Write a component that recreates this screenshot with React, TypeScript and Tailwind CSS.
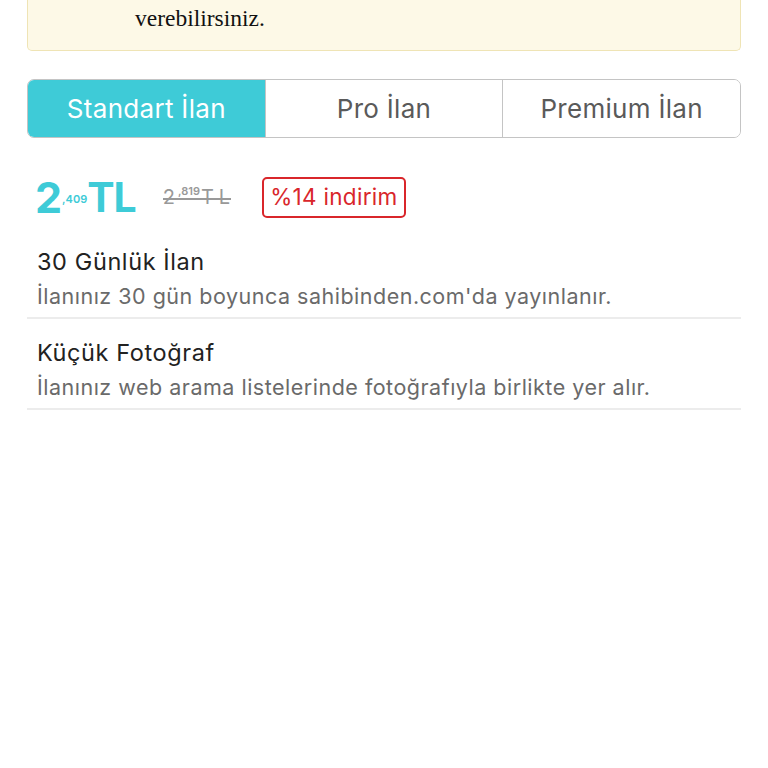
const tabs = ['Standart İlan', 'Pro İlan', 'Premium İlan']

const features = [
  {
    title: '30 Günlük İlan',
    desc: "İlanınız 30 gün boyunca sahibinden.com'da yayınlanır.",
  },
  {
    title: 'Küçük Fotoğraf',
    desc: 'İlanınız web arama listelerinde fotoğrafıyla birlikte yer alır.',
  },
]

export default function App() {
  return (
    <div className="min-h-[768px] w-[768px] bg-white font-['Inter','Liberation_Sans',sans-serif]">
      <div className="mx-[27px] flex h-[51px] items-start rounded-b-[5px] border-x border-b border-[#efe4b5] bg-[#fdf9e7] pl-[107px] pt-[3px]">
        <p className="font-['Liberation_Serif',serif] text-[23.5px] leading-[30px] text-[#111]">
          verebilirsiniz.
        </p>
      </div>

      <div className="mx-[27px] mt-[28px] flex h-[59px] overflow-hidden rounded-[7px] border border-[#c4c4c4]">
        {tabs.map((tab, i) => (
          <div
            key={tab}
            className={
              i === 0
                ? 'flex flex-1 items-center justify-center bg-[#3ecbd7] text-[26px] tracking-[0.3px] text-white'
                : 'flex flex-1 items-center justify-center border-l border-[#c4c4c4] bg-white text-[26px] tracking-[0.3px] text-[#5a5a5a]'
            }
          >
            {tab}
          </div>
        ))}
      </div>

      <div className="ml-[35px] mr-[37px] mt-[38px] flex h-[42px] items-center">
        <div className="flex items-center font-bold text-[#3ecbd7]">
          <span className="text-[43px] leading-none">2</span>
          <span className="mt-[4px] text-[11px] font-semibold">,409</span>
          <span className="text-[41px] leading-none tracking-[-1px]">TL</span>
        </div>
        <div className="relative ml-[27px] flex items-start text-[#999]">
          <span className="text-[20px] leading-none tracking-[1px]">2</span>
          <span className="ml-[2px] mt-[-1px] text-[11px] font-semibold leading-none">,819</span>
          <span className="ml-[1px] text-[20px] leading-none tracking-[5px]">TL</span>
          <span className="absolute left-0 right-[4px] top-[11px] h-[1.5px] bg-[#999]" />
        </div>
        <div className="ml-[27px] flex h-[41px] items-center rounded-[5px] border-2 border-[#d9262b] px-[6px] text-[22.5px] tracking-[0.3px] text-[#d9262b]">
          %14 indirim
        </div>
      </div>

      <div className="mx-[27px] mt-[10px]">
        {features.map((f) => (
          <div key={f.title} className="border-b-2 border-[#ececec] pb-[5px] pl-[10px] pt-[18px]">
            <div className="text-[23.5px] leading-[32px] tracking-[0.6px] text-[#222]">{f.title}</div>
            <div className="mt-[2px] text-[21.5px] leading-[32px] tracking-[0.5px] text-[#6a6a6a]">{f.desc}</div>
          </div>
        ))}
      </div>
    </div>
  )
}
